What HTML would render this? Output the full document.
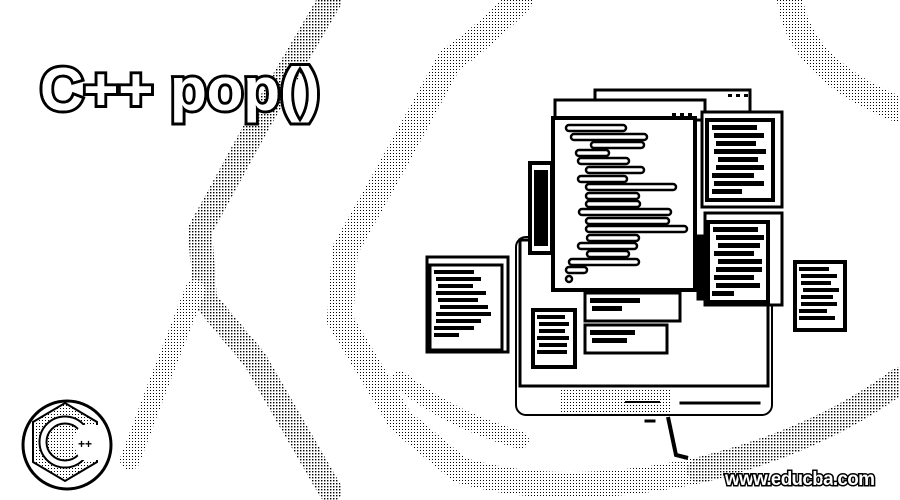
<!DOCTYPE html>
<html><head><meta charset="utf-8"><style>
html,body{margin:0;padding:0;background:#fff;width:900px;height:500px;overflow:hidden}
svg{display:block}
</style></head><body>
<svg width="900" height="500" viewBox="0 0 900 500" xmlns="http://www.w3.org/2000/svg">
<defs>
<pattern id="d" width="3" height="3" patternUnits="userSpaceOnUse"><rect width="3" height="3" fill="#fff"/><rect width="1.4" height="1.4" fill="#000"/></pattern>
<pattern id="d2" width="3" height="3" patternUnits="userSpaceOnUse"><rect width="3" height="3" fill="#fff"/><rect width="1" height="1" fill="#000"/></pattern>
</defs>
<g fill="none" stroke-linecap="round">
<path d="M330 0 L260 120 L200 230 L205 300 L255 360 L330 490" stroke="url(#d)" stroke-width="24"/>
<path d="M195 290 L160 380 L130 460" stroke="url(#d2)" stroke-width="20"/>
<path d="M520 0 Q480 40 450 60 L390 170 L345 250 L340 320 L400 420 L460 470 Q560 500 700 470" stroke="url(#d2)" stroke-width="26"/>
<path d="M790 0 Q800 70 900 110" stroke="url(#d2)" stroke-width="26"/>
<path d="M700 470 Q820 440 900 380" stroke="url(#d)" stroke-width="26"/>
<path d="M400 380 Q450 420 520 440" stroke="url(#d2)" stroke-width="18"/>
</g>
<text x="40" y="110" font-family="Liberation Sans, sans-serif" font-weight="bold" font-size="60" fill="#fff" stroke="#000" stroke-width="6" paint-order="stroke">C++ pop()</text>
<text x="40" y="110" font-family="Liberation Sans, sans-serif" font-weight="bold" font-size="60" fill="#fff">C++ pop()</text>
<g stroke="#000" fill="#fff">
<rect x="516" y="237" width="256" height="178" rx="10" stroke-width="2"/>
<rect x="520" y="240" width="248" height="146" stroke-width="3"/>
<rect x="680" y="402" width="80" height="2" fill="#000"/>
<rect x="645" y="420" width="10" height="2" fill="#000"/>
<path d="M668 417 L676 455 L688 458" fill="none" stroke-width="4"/>
</g>
<rect x="560" y="390" width="110" height="22" fill="url(#d2)"/>
<rect x="625" y="401" width="35" height="2" fill="#000"/>
<g stroke="#000" fill="#fff">
<rect x="595" y="90" width="155" height="28" stroke-width="3"/>
<rect x="555" y="100" width="150" height="20" stroke-width="3"/>
<rect x="553" y="118" width="142" height="172" stroke-width="4"/>
<rect x="702" y="112" width="80" height="95" stroke-width="3"/>
<rect x="707" y="120" width="66" height="80" stroke-width="4"/>
<rect x="705" y="213" width="77" height="92" stroke-width="3"/>
<rect x="708" y="222" width="60" height="80" stroke-width="4"/>
<rect x="530" y="163" width="22" height="90" stroke-width="4"/>
<rect x="427" y="257" width="81" height="95" stroke-width="3"/>
<rect x="430" y="265" width="72" height="85" stroke-width="3"/>
<rect x="795" y="262" width="50" height="68" stroke-width="4"/>
<rect x="533" y="310" width="42" height="57" stroke-width="4"/>
<rect x="585" y="293" width="95" height="28" stroke-width="3"/>
<rect x="585" y="325" width="82" height="28" stroke-width="3"/>
<rect x="697" y="235" width="6" height="65" fill="#000"/>
</g>
<g fill="#000">
<rect x="672" y="113" width="4" height="3"/><rect x="680" y="113" width="4" height="3"/><rect x="688" y="113" width="4" height="3"/>
<rect x="728" y="94" width="4" height="3"/><rect x="736" y="94" width="4" height="3"/><rect x="744" y="94" width="4" height="3"/>
</g>
<g fill="#fff" stroke="#000" stroke-width="2.5">
<rect x="566" y="125" width="60" height="6" rx="3"/>
<rect x="571" y="134" width="76" height="6" rx="3"/>
<rect x="591" y="142" width="53" height="6" rx="3"/>
<rect x="576" y="150" width="33" height="6" rx="3"/>
<rect x="578" y="158" width="51" height="6" rx="3"/>
<rect x="586" y="167" width="58" height="6" rx="3"/>
<rect x="578" y="176" width="49" height="6" rx="3"/>
<rect x="586" y="184" width="90" height="6" rx="3"/>
<rect x="586" y="193" width="53" height="6" rx="3"/>
<rect x="586" y="201" width="54" height="6" rx="3"/>
<rect x="579" y="209" width="92" height="6" rx="3"/>
<rect x="586" y="218" width="83" height="6" rx="3"/>
<rect x="586" y="226" width="101" height="6" rx="3"/>
<rect x="587" y="235" width="52" height="6" rx="3"/>
<rect x="578" y="243" width="59" height="6" rx="3"/>
<rect x="587" y="251" width="42" height="6" rx="3"/>
<rect x="569" y="259" width="70" height="6" rx="3"/>
<rect x="566" y="267" width="21" height="6" rx="3"/>
<rect x="566" y="276" width="6" height="6" rx="3"/>
</g>
<g fill="#000">
<rect x="712" y="125" width="45" height="5"/><rect x="714" y="133" width="50" height="5"/><rect x="716" y="141" width="40" height="5"/><rect x="714" y="149" width="52" height="5"/><rect x="718" y="157" width="40" height="5"/><rect x="716" y="165" width="48" height="5"/><rect x="712" y="173" width="42" height="5"/><rect x="714" y="181" width="50" height="5"/><rect x="712" y="189" width="30" height="5"/>
<rect x="713" y="227" width="45" height="5"/><rect x="716" y="235" width="48" height="5"/><rect x="718" y="243" width="42" height="5"/><rect x="714" y="251" width="40" height="5"/><rect x="718" y="259" width="44" height="5"/><rect x="716" y="267" width="46" height="5"/><rect x="714" y="275" width="40" height="5"/><rect x="716" y="283" width="44" height="5"/><rect x="712" y="291" width="22" height="5"/>
<rect x="434" y="270" width="40" height="4"/><rect x="436" y="277" width="45" height="4"/><rect x="438" y="284" width="35" height="4"/><rect x="436" y="291" width="50" height="4"/><rect x="438" y="298" width="40" height="4"/><rect x="440" y="305" width="48" height="4"/><rect x="436" y="312" width="55" height="4"/><rect x="436" y="319" width="45" height="4"/><rect x="434" y="326" width="40" height="4"/><rect x="434" y="333" width="25" height="4"/>
<rect x="799" y="267" width="30" height="4"/><rect x="801" y="274" width="36" height="4"/><rect x="801" y="281" width="30" height="4"/><rect x="803" y="288" width="36" height="4"/><rect x="801" y="295" width="32" height="4"/><rect x="801" y="302" width="36" height="4"/><rect x="799" y="309" width="28" height="4"/><rect x="799" y="316" width="36" height="4"/>
<rect x="537" y="315" width="28" height="4"/><rect x="539" y="322" width="30" height="4"/><rect x="539" y="329" width="26" height="4"/><rect x="537" y="336" width="32" height="4"/><rect x="539" y="343" width="28" height="4"/><rect x="537" y="350" width="30" height="4"/>
<rect x="534" y="170" width="14" height="76"/>
<rect x="590" y="298" width="50" height="5"/><rect x="592" y="306" width="30" height="5"/>
<rect x="590" y="330" width="45" height="5"/><rect x="592" y="338" width="35" height="5"/>
</g>
<text x="725" y="485" font-family="Liberation Sans, sans-serif" font-weight="bold" font-size="19" fill="#fff" stroke="#000" stroke-width="3" paint-order="stroke" textLength="150">www.educba.com</text>
<circle cx="67" cy="445" r="44" fill="#fff" stroke="#000" stroke-width="3"/>
<polygon points="65,403 97,422 97,462 65,481 33,462 33,422" fill="url(#d2)" stroke="#000" stroke-width="2"/>
<circle cx="65" cy="442" r="22" fill="none" stroke="#000" stroke-width="9"/>
<circle cx="65" cy="442" r="22" fill="none" stroke="#fff" stroke-width="5"/>
<polygon points="80,425 100,425 100,460 80,460 72,442" fill="#fff"/>
<text x="78" y="448" font-family="Liberation Sans, sans-serif" font-weight="bold" font-size="12" fill="#000">++</text>
</svg>
</body></html>
